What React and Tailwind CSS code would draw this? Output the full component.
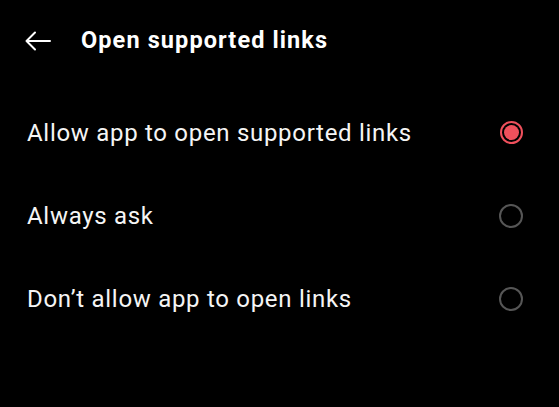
import React, { useState } from "react";

const options = [
  "Allow app to open supported links",
  "Always ask",
  "Don\u2019t allow app to open links",
];

const Radio = ({ checked }) =>
  checked ? (
    <span className="flex h-[23px] w-[23px] items-center justify-center rounded-full border-2 border-[#f0505c]">
      <span className="h-[15px] w-[15px] rounded-full bg-[#f0505c]" />
    </span>
  ) : (
    <span className="h-[24px] w-[24px] rounded-full border-2 border-[#565656]" />
  );

const App = () => {
  const [selected, setSelected] = useState(0);

  return (
    <div
      className="h-[407px] w-[559px] overflow-hidden bg-black text-white"
      style={{ fontFamily: "Roboto, 'Noto Sans', sans-serif" }}
    >
      <div className="flex h-[82px] items-center">
        <button className="ml-[24px] flex h-[26px] w-[28px] items-center">
          <svg width="28" height="20" viewBox="0 0 28 20" fill="none">
            <path
              d="M26 10H2.5M11 1.5L2.5 10L11 18.5"
              stroke="white"
              strokeWidth="2"
              strokeLinecap="round"
              strokeLinejoin="round"
            />
          </svg>
        </button>
        <h1 className="ml-[29px] text-[23.5px] font-bold tracking-[1.1px]">
          Open supported links
        </h1>
      </div>
      <div className="mt-[9px]">
        {options.map((label, idx) => (
          <div
            key={idx}
            onClick={() => setSelected(idx)}
            className="flex h-[83px] cursor-pointer items-center justify-between pl-[27px] pr-[36px]"
          >
            <span className="text-[24px] tracking-[0.7px] text-[#f5f5f5]">
              {label}
            </span>
            <Radio checked={selected === idx} />
          </div>
        ))}
      </div>
    </div>
  );
};

export default App;
